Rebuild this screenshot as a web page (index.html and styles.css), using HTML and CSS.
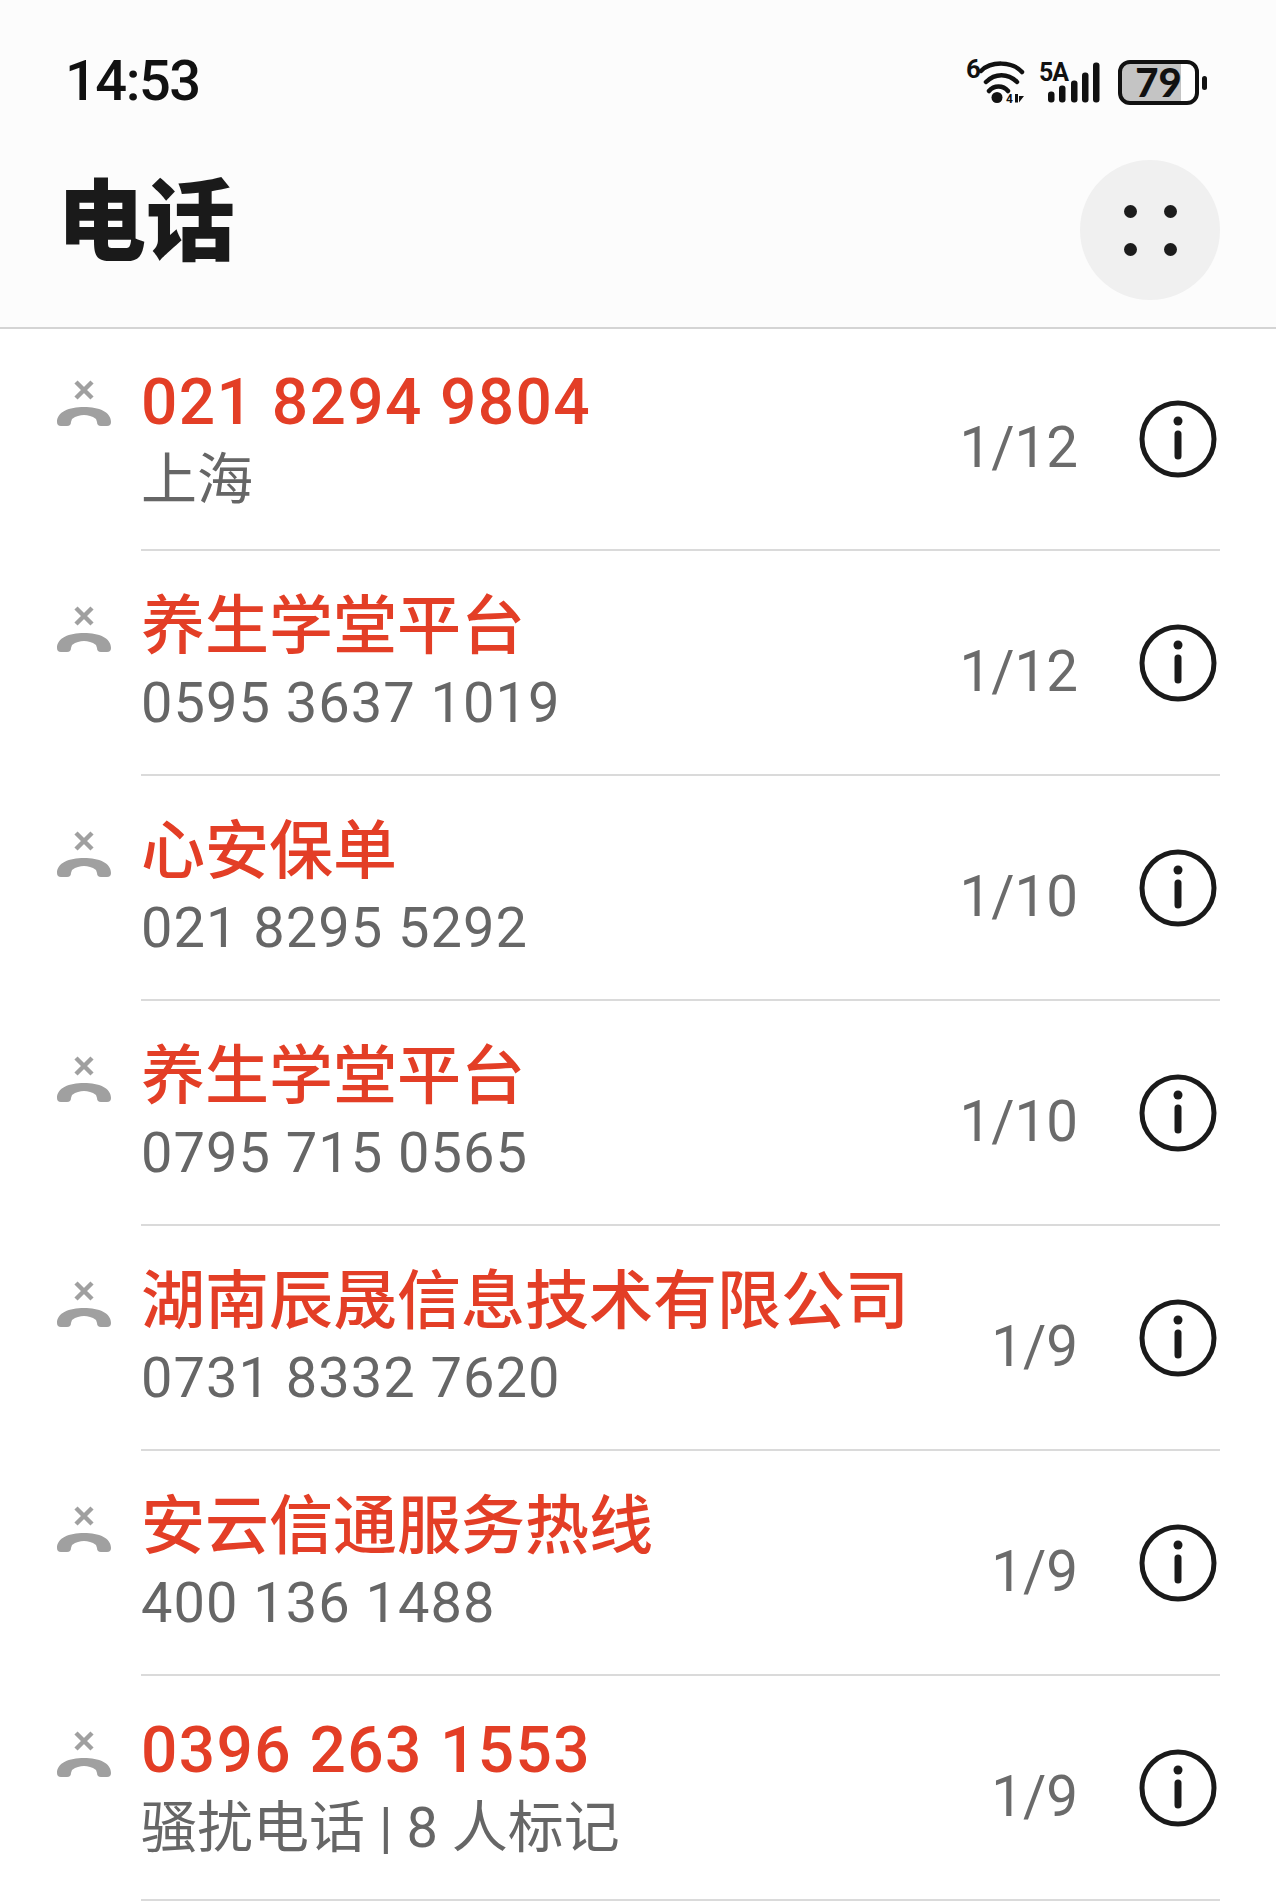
FILE: index.html
```html
<!DOCTYPE html>
<html lang="zh-CN">
<head>
  <meta charset="UTF-8" />
  <title>电话</title>
  <link rel="stylesheet" href="styles.css">
</head>
<body>
  <svg class="defs" width="0" height="0">
    <symbol id="missed" viewBox="0 0 54 46">
      <path d="M19 2 L35 18 M35 2 L19 18" fill="none" stroke="currentColor" stroke-width="4.5" />
      <path d="M0 42 C0 32 12 27 27 27 C42 27 54 32 54 42 Q54 46 50 46 H44 Q40 46 40 42 L39 39 C35 36 31 35 27 35 C23 35 19 36 15 39 L14 42 Q14 46 10 46 H4 Q0 46 0 42Z" fill="currentColor" />
    </symbol>
    <symbol id="info" viewBox="0 0 78 78">
      <circle cx="39" cy="39" r="36" fill="none" stroke="currentColor" stroke-width="5" />
      <circle cx="39" cy="21" r="4.5" fill="currentColor" />
      <path d="M39 34 V56" fill="none" stroke="currentColor" stroke-width="7" stroke-linecap="round" />
    </symbol>
  </svg>

  <header class="top">
    <div class="status">
      <span class="time">14:53</span>
      <div class="status-icons">
        <svg class="wifi" width="61" height="56" viewBox="0 -6 61 56">
          <text x="1" y="16.5" class="tiny">6</text>
          <path d="M16 10 C26 0 47 0 57 11 M21 21 C30 12 43 12 52 21 M24 30 C29 24 38 24 43 30" fill="none" stroke="#111" stroke-width="4.5" stroke-linecap="round" />
          <circle cx="32" cy="36.5" r="5.5" fill="#111" />
          <text x="41" y="41.5" class="micro">4</text>
          <path d="M50 33 H53 V41.5 H50Z M54 35 L59 35 L54 41.5Z" fill="#111" />
        </svg>
        <svg class="signal" width="68" height="56" viewBox="0 -6 68 56">
          <text x="1" y="19.5" class="tiny five">5A</text>
          <rect x="10" y="30.5" width="6.5" height="11" rx="3" />
          <rect x="21" y="24.5" width="6.5" height="17" rx="3" />
          <rect x="33" y="19.5" width="6.5" height="22" rx="3" />
          <rect x="44" y="11.5" width="6.5" height="30" rx="3" />
          <rect x="55" y="1.5" width="6.5" height="40" rx="3" />
        </svg>
        <div class="battery-wrap">
          <div class="battery">79</div>
          <span class="nib"></span>
        </div>
      </div>
    </div>
    <div class="title-bar">
      <h1>电话</h1>
      <button class="more" aria-label="更多">
        <i></i><i></i><i></i><i></i>
      </button>
    </div>
  </header>

  <main class="list">
    <div class="row">
      <svg class="missed"><use href="#missed" /></svg>
      <div class="row-body">
        <div class="texts">
          <div class="name num">021 8294 9804</div>
          <div class="sub cjk">上海</div>
        </div>
        <span class="count">1/12</span>
        <svg class="info"><use href="#info" /></svg>
      </div>
    </div>
    <div class="row">
      <svg class="missed"><use href="#missed" /></svg>
      <div class="row-body">
        <div class="texts">
          <div class="name">养生学堂平台</div>
          <div class="sub">0595 3637 1019</div>
        </div>
        <span class="count">1/12</span>
        <svg class="info"><use href="#info" /></svg>
      </div>
    </div>
    <div class="row">
      <svg class="missed"><use href="#missed" /></svg>
      <div class="row-body">
        <div class="texts">
          <div class="name">心安保单</div>
          <div class="sub">021 8295 5292</div>
        </div>
        <span class="count">1/10</span>
        <svg class="info"><use href="#info" /></svg>
      </div>
    </div>
    <div class="row">
      <svg class="missed"><use href="#missed" /></svg>
      <div class="row-body">
        <div class="texts">
          <div class="name">养生学堂平台</div>
          <div class="sub">0795 715 0565</div>
        </div>
        <span class="count">1/10</span>
        <svg class="info"><use href="#info" /></svg>
      </div>
    </div>
    <div class="row">
      <svg class="missed"><use href="#missed" /></svg>
      <div class="row-body">
        <div class="texts">
          <div class="name">湖南辰晟信息技术有限公司</div>
          <div class="sub">0731 8332 7620</div>
        </div>
        <span class="count">1/9</span>
        <svg class="info"><use href="#info" /></svg>
      </div>
    </div>
    <div class="row">
      <svg class="missed"><use href="#missed" /></svg>
      <div class="row-body">
        <div class="texts">
          <div class="name">安云信通服务热线</div>
          <div class="sub">400 136 1488</div>
        </div>
        <span class="count">1/9</span>
        <svg class="info"><use href="#info" /></svg>
      </div>
    </div>
    <div class="row">
      <svg class="missed"><use href="#missed" /></svg>
      <div class="row-body">
        <div class="texts">
          <div class="name num">0396 263 1553</div>
          <div class="sub cjk">骚扰电话 | 8 人标记</div>
        </div>
        <span class="count">1/9</span>
        <svg class="info"><use href="#info" /></svg>
      </div>
    </div>
  </main>
</body>
</html>
```

FILE: styles.css
```css
body {
  margin: 0;
  height: 1901px;
  overflow: hidden;
  background: #fff;
  font-family: Roboto, "Noto Sans CJK SC", sans-serif;
}
.defs { position: absolute; }

/* top area */
.top {
  background: #fcfcfc;
  border-bottom: 2px solid #d4d4d4;
  height: 329px;
  box-sizing: border-box;
}
.status {
  height: 160px;
  display: flex;
  justify-content: space-between;
  align-items: center;
  padding: 0 69px 0 65px;
}
.time {
  font-family: Roboto, sans-serif;
  font-weight: 500;
  font-size: 56px;
  letter-spacing: -1.5px;
  margin-top: 2px;
  color: #111;
}
.status-icons { display: flex; align-items: center; gap: 12px; margin-top: 5px; }
.tiny { font-family: Roboto, sans-serif; font-weight: 700; font-size: 26px; fill: #111; }
.five { font-size: 25px; letter-spacing: -1px; }
.micro { font-family: Roboto, sans-serif; font-weight: 700; font-size: 12px; fill: #111; }
.signal rect { fill: #111; }
.battery-wrap { display: flex; align-items: center; gap: 3px; }
.battery {
  width: 81px;
  height: 45px;
  box-sizing: border-box;
  border: 4px solid #111;
  border-radius: 12px;
  background: linear-gradient(90deg, #c4c4c4 81%, #fff 81%);
  text-align: center;
  font-family: Lato, sans-serif;
  font-weight: 900;
  font-size: 40px;
  line-height: 37px;
  color: #111;
}
.nib { width: 5px; height: 14px; border-radius: 3px; background: #111; }

.title-bar {
  display: flex;
  justify-content: space-between;
  align-items: flex-start;
  padding: 0 56px 0 57px;
}
h1 {
  margin: 0;
  font-family: "Noto Sans CJK SC", sans-serif;
  font-weight: 900;
  font-size: 89px;
  line-height: 110px;
  color: #1a1a1a;
}
.more {
  width: 140px;
  height: 140px;
  padding: 0;
  border: 0;
  border-radius: 50%;
  background: #f0f0f0;
  display: grid;
  grid-template-columns: 13px 13px;
  grid-template-rows: 13px 13px;
  justify-content: center;
  align-content: center;
  column-gap: 27px;
  row-gap: 25px;
}
.more i { border-radius: 50%; background: #1c1c1c; }

/* call rows */
.row {
  height: 225px;
  display: flex;
  padding-right: 56px;
}
.row:first-child { height: 222px; }
.missed {
  width: 54px;
  height: 46px;
  margin: 55px 30px 0 57px;
  color: #a0a0a0;
  flex: none;
}
.row:first-child .missed { margin-top: 51px; }
.row-body {
  flex: 1;
  display: flex;
  align-items: center;
  border-bottom: 2px solid #dadada;
  padding-right: 3px;
}
.texts { flex: 1; align-self: flex-start; padding-top: 36px; }
.row:first-child .texts { padding-top: 35px; }
.name {
  font-family: "Noto Sans CJK SC", sans-serif;
  font-weight: 500;
  font-size: 64px;
  height: 75px;
  line-height: 67px;
  color: #e33e26;
  white-space: nowrap;
}
.name.num { font-family: Roboto, sans-serif; line-height: 77px; letter-spacing: 1.4px; }
.sub {
  font-size: 56px;
  line-height: 75px;
  margin-top: 4px;
  letter-spacing: 1px;
  color: #666;
  white-space: nowrap;
}
.sub.cjk { letter-spacing: 0; }
.count {
  font-size: 56.5px;
  color: #6b6b6b;
  margin: 18px 61px 0 0;
}
.info { width: 78px; height: 78px; color: #1a1a1a; flex: none; }
```
